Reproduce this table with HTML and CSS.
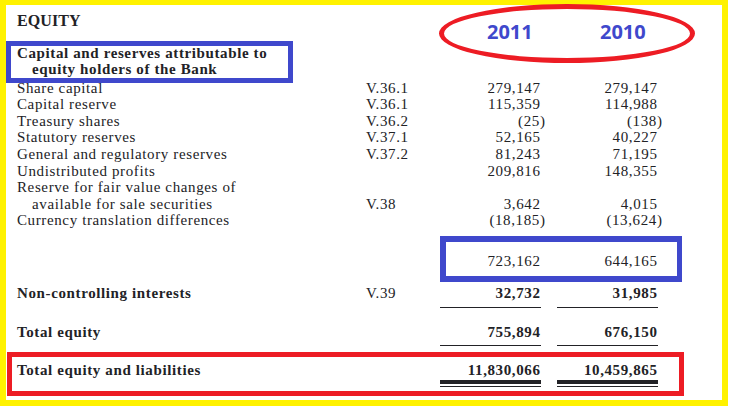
FILE: index.html
```html
<!DOCTYPE html>
<html>
<head>
<meta charset="utf-8">
<link rel="stylesheet" href="styles.css">
</head>
<body>
<div class="sheet">
  <div class="head">
    <div class="title">EQUITY</div>
    <div class="year">2011</div>
    <div class="year">2010</div>
  </div>
  <div class="ellipse"></div>

  <div class="group">
    <div>Capital and reserves attributable to</div>
    <div class="ind">equity holders of the Bank</div>
  </div>

  <div class="rows">
    <div class="row"><div class="lbl">Share capital</div><div class="note">V.36.1</div><div class="num">279,147</div><div class="num c2">279,147</div></div>
    <div class="row"><div class="lbl">Capital reserve</div><div class="note">V.36.1</div><div class="num">115,359</div><div class="num c2">114,988</div></div>
    <div class="row"><div class="lbl">Treasury shares</div><div class="note">V.36.2</div><div class="num">(25<span class="cp">)</span></div><div class="num c2">(138<span class="cp">)</span></div></div>
    <div class="row"><div class="lbl">Statutory reserves</div><div class="note">V.37.1</div><div class="num">52,165</div><div class="num c2">40,227</div></div>
    <div class="row"><div class="lbl">General and regulatory reserves</div><div class="note">V.37.2</div><div class="num">81,243</div><div class="num c2">71,195</div></div>
    <div class="row"><div class="lbl">Undistributed profits</div><div class="note"></div><div class="num">209,816</div><div class="num c2">148,355</div></div>
    <div class="row two"><div class="lbl">Reserve for fair value changes of<div class="ind">available for sale securities</div></div><div class="note">V.38</div><div class="num">3,642</div><div class="num c2">4,015</div></div>
    <div class="row"><div class="lbl">Currency translation differences</div><div class="note"></div><div class="num">(18,185<span class="cp">)</span></div><div class="num c2">(13,624<span class="cp">)</span></div></div>
  </div>

  <div class="subtotal">
    <div class="num">723,162</div>
    <div class="num c2">644,165</div>
  </div>

  <div class="row bold nci"><div class="lbl">Non-controlling interests</div><div class="note">V.39</div><div class="num ul">32,732</div><div class="num c2 ul">31,985</div></div>
  <div class="row bold teq"><div class="lbl">Total equity</div><div class="note"></div><div class="num ul">755,894</div><div class="num c2 ul">676,150</div></div>

  <div class="grand">
    <div class="row bold"><div class="lbl">Total equity and liabilities</div><div class="note"></div><div class="num dbl">11,830,066</div><div class="num c2 dbl">10,459,865</div></div>
  </div>
</div>
</body>
</html>
```

FILE: styles.css
```css
html, body {
  margin: 0;
  padding: 0;
  background: #ffffff;
}

.sheet {
  position: relative;
  box-sizing: border-box;
  width: 728px;
  height: 406px;
  border-style: solid;
  border-color: #fff200;
  border-width: 5px 6px 6px 6px;
  background: #ffffff;
  color: #222226;
  font-family: "Liberation Serif", "Times New Roman", serif;
  font-size: 15px;
  letter-spacing: 0.62px;
}

.head {
  display: grid;
  grid-template-columns: 481px 113px auto;
  height: 36px;
}

.title {
  padding: 7px 0 0 11px;
  font-size: 16px;
  line-height: 18px;
  font-weight: bold;
  letter-spacing: 0.1px;
}

.year {
  padding-top: 17px;
  font-family: "Open Sans", "Liberation Sans", sans-serif;
  font-weight: 700;
  font-size: 20px;
  line-height: 20px;
  letter-spacing: 0;
  color: #3f48cc;
}

.ellipse {
  position: absolute;
  left: 433px;
  top: -1px;
  width: 256px;
  height: 59px;
  box-sizing: border-box;
  border: 5px solid #ed1c24;
  border-radius: 50%;
  pointer-events: none;
}

.group {
  position: relative;
  z-index: 1;
  box-sizing: border-box;
  width: 287px;
  height: 42px;
  margin-bottom: -3.4px;
  padding-left: 6px;
  border: 5px solid #3f48cc;
  font-weight: bold;
  line-height: 15.5px;
  white-space: nowrap;
}

.ind {
  padding-left: 15px;
}

.rows {
  line-height: 16.6px;
}

.row {
  display: grid;
  grid-template-columns: 349px 74px 100px 17px 100px;
  align-items: start;
  margin-left: 11px;
  line-height: 16.6px;
  white-space: nowrap;
}

.row.two .note,
.row.two .num {
  align-self: end;
}

.note {
  font-weight: normal;
}

.num {
  text-align: right;
  margin-right: -0.6px;
}

.c2 {
  grid-column: 5;
}

.cp {
  margin-right: -5px;
}

.subtotal {
  display: grid;
  grid-template-columns: 94px 17px 100px;
  box-sizing: border-box;
  width: 242px;
  margin: 7px 0 0 434px;
  padding: 10.6px 0 6.8px 0;
  border-style: solid;
  border-color: #3f48cc;
  border-width: 6px 5px 6px 6px;
  line-height: 16.6px;
}

.subtotal .c2 {
  grid-column: 3;
}

.bold {
  font-weight: bold;
}

.nci {
  margin-top: 2.6px;
}

.nci .ul {
  padding-bottom: 5.8px;
  border-bottom: 1px solid #222226;
}

.teq {
  margin-top: 16px;
}

.teq .ul {
  padding-bottom: 4.8px;
  border-bottom: 1px solid #222226;
}

.grand {
  box-sizing: border-box;
  width: 677px;
  margin: 6px 0 0 1px;
  padding: 4.6px 0 4.8px 0;
  border: 5px solid #ed1c24;
}

.grand .row {
  margin-left: 5px;
}

.dbl {
  padding-bottom: 8px;
  background: linear-gradient(to top,
    #222226 0, #222226 1.3px,
    transparent 1.3px, transparent 2.8px,
    #222226 2.8px, #222226 6.8px,
    transparent 6.8px);
}
```
